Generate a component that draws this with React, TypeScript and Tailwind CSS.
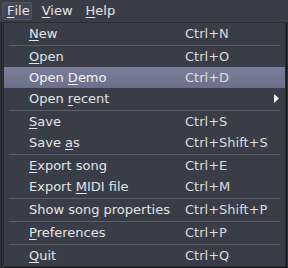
import React from "react";

type Item =
  | { sep: true }
  | { label: string; key?: number; shortcut?: string; sub?: boolean; active?: boolean };

const items: Item[] = [
  { label: "New", key: 0, shortcut: "Ctrl+N" },
  { sep: true },
  { label: "Open", key: 0, shortcut: "Ctrl+O" },
  { label: "Open Demo", key: 5, shortcut: "Ctrl+D", active: true },
  { label: "Open recent", key: 5, sub: true },
  { sep: true },
  { label: "Save", key: 0, shortcut: "Ctrl+S" },
  { label: "Save as", key: 5, shortcut: "Ctrl+Shift+S" },
  { sep: true },
  { label: "Export song", key: 0, shortcut: "Ctrl+E" },
  { label: "Export MIDI file", key: 7, shortcut: "Ctrl+M" },
  { sep: true },
  { label: "Show song properties", shortcut: "Ctrl+Shift+P" },
  { sep: true },
  { label: "Preferences", key: 0, shortcut: "Ctrl+P" },
  { sep: true },
  { label: "Quit", key: 0, shortcut: "Ctrl+Q" },
];

// label with one underlined mnemonic letter
const Mnemonic = ({ text, at }: { text: string; at?: number }) => {
  if (at === undefined) return <>{text}</>;
  return (
    <>
      {text.slice(0, at)}
      <span className="underline underline-offset-2">{text[at]}</span>
      {text.slice(at + 1)}
    </>
  );
};

const App = () => {
  return (
    <div
      className="w-[288px] h-[268px] bg-[#2f323b] text-[13px] text-[#e4e4e4] overflow-hidden flex flex-col"
      style={{ fontFamily: '"DejaVu Sans", sans-serif' }}
    >
      <div className="h-[22px] bg-[#3a3d47] flex items-center pl-[2px]">
        <div className="h-[18px] pl-[4px] pr-[1px] flex items-center rounded-[2px] bg-[#444856] border border-[#50545f]">
          <Mnemonic text="File" at={0} />
        </div>
        <div className="ml-[10px]">
          <Mnemonic text="View" at={0} />
        </div>
        <div className="ml-[13px]">
          <Mnemonic text="Help" at={0} />
        </div>
      </div>

      <div className="relative flex-1">
        <div className="absolute left-[1px] top-0 bottom-0 w-[1px] bg-[#23252b]" />
        <div className="absolute left-[3px] top-0 w-[283px] bg-[#393d48] border border-[#2a2c33] shadow-[1px_1px_0_#15161a] flex flex-col">
          {items.map((it, i) =>
            "sep" in it ? (
              <div key={i} className="h-[2px] flex items-center px-[5px]">
                <div className="h-[1px] w-full bg-[#5a5e69]" />
              </div>
            ) : (
              <div
                key={i}
                className={
                  "h-[21px] flex items-center relative " +
                  (it.active ? "bg-gradient-to-b from-[#7a809b] to-[#6a7089] text-[#f2f2f2]" : "")
                }
              >
                <div className="pl-[25px] w-[181px] whitespace-nowrap">
                  <Mnemonic text={it.label} at={it.key} />
                </div>
                {it.shortcut && <div className="whitespace-nowrap text-[#dcdcdc]">{it.shortcut}</div>}
                {it.sub && (
                  <svg className="absolute right-[6px]" width="5" height="9" viewBox="0 0 5 9">
                    <path d="M0 0 L5 4.5 L0 9 Z" fill="#f0f0f0" />
                  </svg>
                )}
              </div>
            )
          )}
        </div>
      </div>
    </div>
  );
};

export default App;
